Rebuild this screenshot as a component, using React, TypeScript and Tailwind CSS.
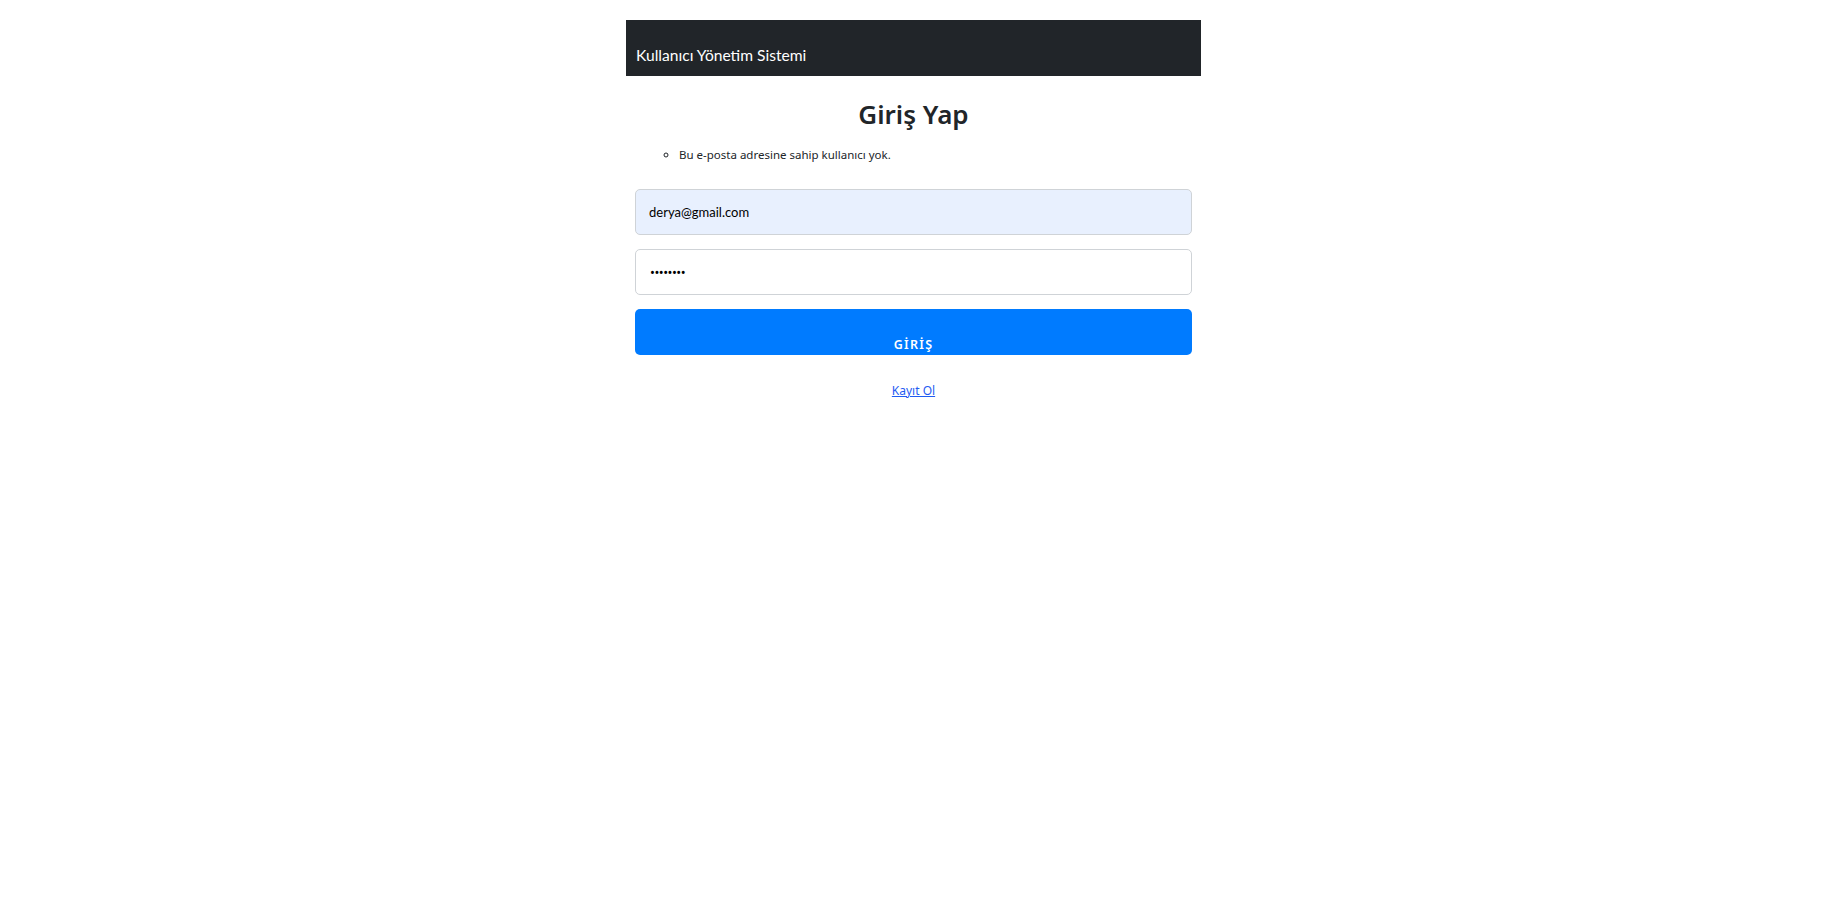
import React from "react";

const font = { fontFamily: '"Noto Sans", "Open Sans", sans-serif' };
const lato = { fontFamily: 'Lato, "Noto Sans", sans-serif' };

export default function App() {
  return (
    <div className="min-h-screen bg-white pt-5 pr-[15px] text-[#212529]" style={font}>
      <div className="mx-auto w-[575px]">
        <nav className="flex h-[56px] items-end bg-[#212529] px-[10px] pb-[9px]">
          <span className="text-[15.6px] leading-6 text-white" style={lato}>
            Kullanıcı Yönetim Sistemi
          </span>
        </nav>

        <div className="px-[9px]">
          <h2 className="mt-[23px] text-center text-[26px] font-semibold leading-[31px]">Giriş Yap</h2>

          <ul className="mt-[16px] list-[circle] pl-[44px] text-[11.5px] leading-[18px]">
            <li>Bu e-posta adresine sahip kullanıcı yok.</li>
          </ul>

          <form className="mt-[25px] flex flex-col gap-[14px]">
            <input
              type="text"
              readOnly
              value="derya@gmail.com"
              style={lato}
              className="h-[46px] w-full rounded-[5px] border border-[#cfd3d7] bg-[#e8f0fe] px-[13px] text-[13px] text-black outline-none"
            />
            <input
              type="text"
              readOnly
              value="••••••••"
              className="h-[46px] w-full rounded-[5px] border border-[#cfd3d7] bg-white px-[14px] text-[13px] tracking-[-0.5px] text-black outline-none"
            />
            <button
              type="button"
              className="flex h-[46px] w-full items-end justify-center rounded-[5px] bg-[#007bff] pb-0 text-[12.5px] font-semibold tracking-[1.3px] text-white"
            >
              GİRİŞ
            </button>
          </form>

          <div className="mt-[22px] text-center">
            <a href="#" className="text-[12px] text-[#1f5cf2] underline">
              Kayıt Ol
            </a>
          </div>
        </div>
      </div>
    </div>
  );
}
